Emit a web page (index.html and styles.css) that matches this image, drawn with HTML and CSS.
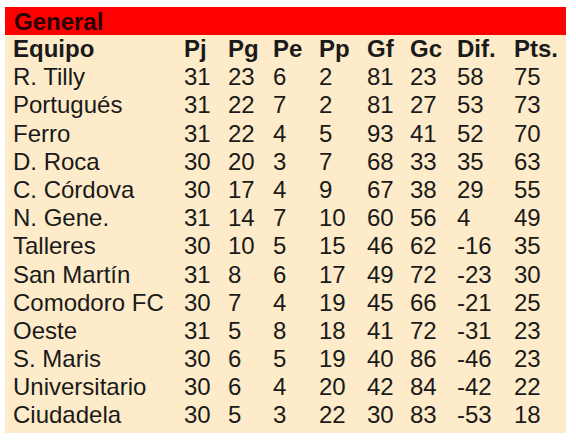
FILE: index.html
```html
<!DOCTYPE html>
<html lang="es">
<head>
<meta charset="utf-8">
<link rel="stylesheet" href="styles.css">
</head>
<body>
<div class="board">
  <div class="title">General</div>
  <div class="table">
    <div class="row head"><span>Equipo</span><span>Pj</span><span>Pg</span><span>Pe</span><span>Pp</span><span>Gf</span><span>Gc</span><span>Dif.</span><span>Pts.</span></div>
    <div class="row"><span>R. Tilly</span><span>31</span><span>23</span><span>6</span><span>2</span><span>81</span><span>23</span><span>58</span><span>75</span></div>
    <div class="row"><span>Portugués</span><span>31</span><span>22</span><span>7</span><span>2</span><span>81</span><span>27</span><span>53</span><span>73</span></div>
    <div class="row"><span>Ferro</span><span>31</span><span>22</span><span>4</span><span>5</span><span>93</span><span>41</span><span>52</span><span>70</span></div>
    <div class="row"><span>D. Roca</span><span>30</span><span>20</span><span>3</span><span>7</span><span>68</span><span>33</span><span>35</span><span>63</span></div>
    <div class="row"><span>C. Córdova</span><span>30</span><span>17</span><span>4</span><span>9</span><span>67</span><span>38</span><span>29</span><span>55</span></div>
    <div class="row"><span>N. Gene.</span><span>31</span><span>14</span><span>7</span><span>10</span><span>60</span><span>56</span><span>4</span><span>49</span></div>
    <div class="row"><span>Talleres</span><span>30</span><span>10</span><span>5</span><span>15</span><span>46</span><span>62</span><span>-16</span><span>35</span></div>
    <div class="row"><span>San Martín</span><span>31</span><span>8</span><span>6</span><span>17</span><span>49</span><span>72</span><span>-23</span><span>30</span></div>
    <div class="row"><span>Comodoro FC</span><span>30</span><span>7</span><span>4</span><span>19</span><span>45</span><span>66</span><span>-21</span><span>25</span></div>
    <div class="row"><span>Oeste</span><span>31</span><span>5</span><span>8</span><span>18</span><span>41</span><span>72</span><span>-31</span><span>23</span></div>
    <div class="row"><span>S. Maris</span><span>30</span><span>6</span><span>5</span><span>19</span><span>40</span><span>86</span><span>-46</span><span>23</span></div>
    <div class="row"><span>Universitario</span><span>30</span><span>6</span><span>4</span><span>20</span><span>42</span><span>84</span><span>-42</span><span>22</span></div>
    <div class="row"><span>Ciudadela</span><span>30</span><span>5</span><span>3</span><span>22</span><span>30</span><span>83</span><span>-53</span><span>18</span></div>
  </div>
</div>
</body>
</html>
```
FILE: styles.css
```css
html, body {
  margin: 0;
  padding: 0;
  background: #ffffff;
}
body {
  font-family: "Liberation Sans", Arial, sans-serif;
  color: #1a1a1a;
}
.board {
  margin: 7px 0 0 5px;
  width: 561px;
}
.title {
  background: #fe0000;
  height: 28px;
  line-height: 29px;
  padding-left: 9px;
  font-size: 24px;
  font-weight: bold;
  color: #2a0202;
}
.table {
  background: #fdebc9;
  padding: 0 0 3px 8px;
}
.row {
  display: grid;
  grid-template-columns: 171px 44px 45px 46px 48px 43px 47px 57px 1fr;
  height: 28.2px;
  line-height: 28px;
  font-size: 24px;
  white-space: nowrap;
}
.head {
  font-weight: bold;
}
```
